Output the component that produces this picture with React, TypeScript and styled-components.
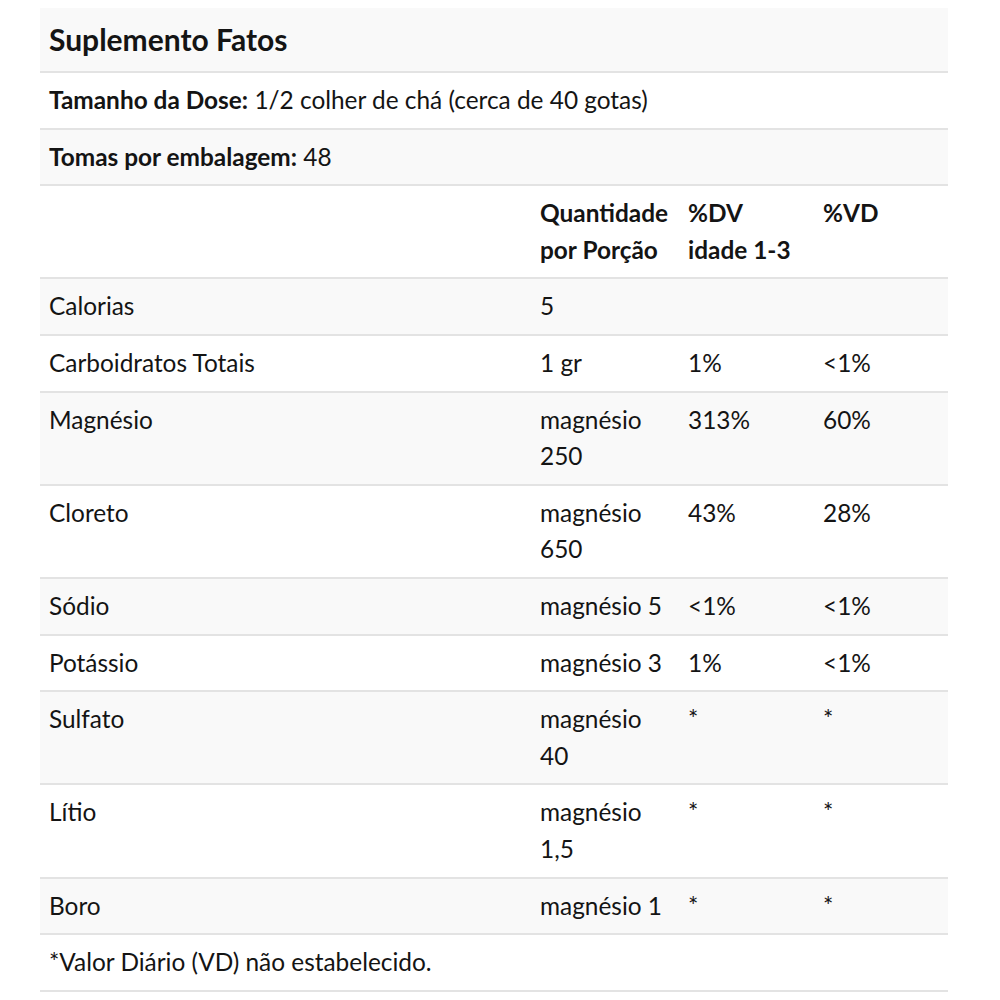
import React from "react";
import styled, { createGlobalStyle } from "styled-components";

const Global = createGlobalStyle`
  html, body { margin: 0; padding: 0; background: #ffffff; }
  body { font-family: Lato, "Open Sans", sans-serif; color: #141414; }
`;

const Page = styled.div`
  padding: 8px 52px 0 40px;
`;

const Table = styled.table`
  width: 908px;
  border-collapse: collapse;
  table-layout: fixed;
  font-size: 24.4px;
  line-height: 36.5px;
`;

const Row = styled.tr<{ $shade?: boolean }>`
  background: ${(p) => (p.$shade ? "#f9f9f9" : "#ffffff")};
  border-bottom: 2px solid #e3e3e3;
`;

const Cell = styled.td<{ $bold?: boolean }>`
  padding: 9px 9px 9.15px 9px;
  vertical-align: top;
  font-weight: ${(p) => (p.$bold ? 700 : 400)};
`;

const TitleCell = styled.td`
  padding: 9px 9px 10px 9px;
  font-size: 30px;
  line-height: 44px;
  font-weight: 700;
`;

const Label = styled.b`
  font-weight: 700;
`;

const rows: { name: string; qty: string; dv: string; vd: string }[] = [
  { name: "Calorias", qty: "5", dv: "", vd: "" },
  { name: "Carboidratos Totais", qty: "1 gr", dv: "1%", vd: "<1%" },
  { name: "Magnésio", qty: "magnésio 250", dv: "313%", vd: "60%" },
  { name: "Cloreto", qty: "magnésio 650", dv: "43%", vd: "28%" },
  { name: "Sódio", qty: "magnésio 5", dv: "<1%", vd: "<1%" },
  { name: "Potássio", qty: "magnésio 3", dv: "1%", vd: "<1%" },
  { name: "Sulfato", qty: "magnésio 40", dv: "*", vd: "*" },
  { name: "Lítio", qty: "magnésio 1,5", dv: "*", vd: "*" },
  { name: "Boro", qty: "magnésio 1", dv: "*", vd: "*" },
];

export default function App() {
  return (
    <Page>
      <Global />
      <Table>
        <colgroup>
          <col style={{ width: 491 }} />
          <col style={{ width: 148 }} />
          <col style={{ width: 135 }} />
          <col style={{ width: 134 }} />
        </colgroup>
        <tbody>
          <Row $shade>
            <TitleCell colSpan={4}>Suplemento Fatos</TitleCell>
          </Row>
          <Row>
            <Cell colSpan={4}>
              <Label>Tamanho da Dose:</Label> 1/2 colher de chá (cerca de 40 gotas)
            </Cell>
          </Row>
          <Row $shade>
            <Cell colSpan={4}>
              <Label>Tomas por embalagem:</Label> 48
            </Cell>
          </Row>
          <Row>
            <Cell />
            <Cell $bold>Quantidade por Porção</Cell>
            <Cell $bold>%DV idade 1-3</Cell>
            <Cell $bold>%VD</Cell>
          </Row>
          {rows.map((r, i) => (
            <Row key={r.name} $shade={i % 2 === 0}>
              <Cell>{r.name}</Cell>
              <Cell>{r.qty}</Cell>
              <Cell>{r.dv}</Cell>
              <Cell>{r.vd}</Cell>
            </Row>
          ))}
          <Row>
            <Cell colSpan={4}>*Valor Diário (VD) não estabelecido.</Cell>
          </Row>
        </tbody>
      </Table>
    </Page>
  );
}
